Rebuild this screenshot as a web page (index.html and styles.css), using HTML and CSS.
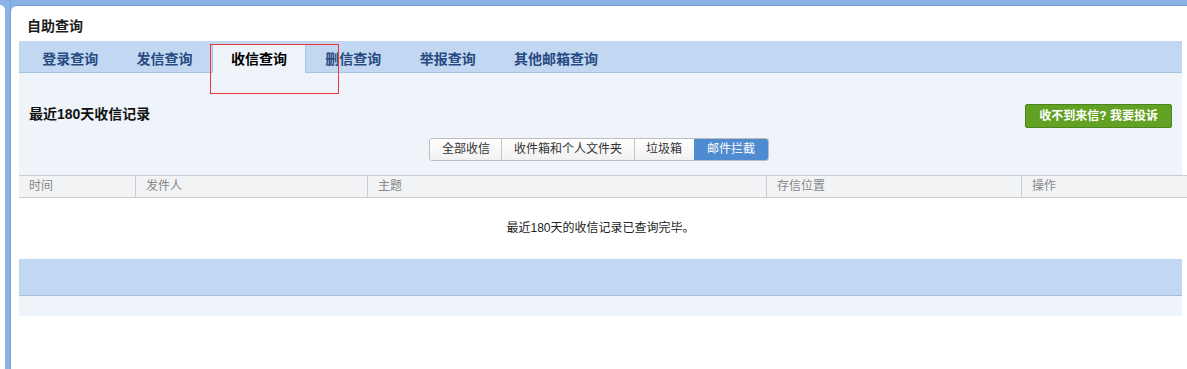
FILE: index.html
```html
<!DOCTYPE html>
<html lang="zh-CN">
<head>
<meta charset="utf-8">
<title>自助查询</title>
<link rel="stylesheet" href="styles.css">
</head>
<body>
<div class="shell">
  <div class="rail"></div>
  <div class="bar"></div>
  <div class="panel">
    <div class="title">自助查询</div>
    <div class="tabbar">
      <div class="tab">登录查询</div>
      <div class="tab">发信查询</div>
      <div class="tab active">收信查询</div>
      <div class="tab">删信查询</div>
      <div class="tab">举报查询</div>
      <div class="tab">其他邮箱查询</div>
    </div>
    <div class="content">
      <div class="toolbar">
        <div class="heading">最近180天收信记录</div>
        <div class="complain">收不到来信? 我要投诉</div>
      </div>
      <div class="segwrap">
        <div class="seg">
          <div class="segbtn">全部收信</div>
          <div class="segbtn">收件箱和个人文件夹</div>
          <div class="segbtn">垃圾箱</div>
          <div class="segbtn on">邮件拦截</div>
        </div>
      </div>
    </div>
    <div class="thead">
      <div class="th">时间</div>
      <div class="th sep">发件人</div>
      <div class="th sep">主题</div>
      <div class="th sep">存信位置</div>
      <div class="th sep">操作</div>
    </div>
    <div class="empty">最近180天的收信记录已查询完毕。</div>
    <div class="band"></div>
    <div class="band2"></div>
  </div>
</div>
<div class="mark"></div>
</body>
</html>
```
FILE: styles.css
```css
html, body {
  margin: 0;
  padding: 0;
  background: #fff;
  font-family: "Liberation Sans", "Noto Sans CJK SC", sans-serif;
  font-size: 12px;
  color: #222;
}
.shell {
  display: flex;
  height: 369px;
  background: #8ab3e6;
}
.rail {
  width: 5px;
  margin-top: 5px;
  background: #fff;
  border-top-right-radius: 5px;
}
.bar {
  width: 5px;
  border-right: 1px solid #74a2da;
}
.panel {
  flex: 1;
  margin-top: 5px;
  background: #fff;
  border-top: 1px solid #6f9ad2;
  border-top-left-radius: 6px;
  padding: 0 5px 0 8px;
  position: relative;
  overflow: hidden;
}
.title {
  padding: 11px 0 6px 8px;
  font-size: 14px;
  line-height: 18px;
  font-weight: bold;
  color: #1d1d1d;
}
.tabbar {
  display: flex;
  height: 31px;
  padding: 0 0 0 4px;
  background: #c2d8f2;
  border-bottom: 1px solid #a8c3e2;
  align-items: flex-end;
}
.tab {
  height: 28px;
  line-height: 28px;
  padding: 0 18.2px;
  margin-bottom: -1px;
  border: 1px solid transparent;
  border-bottom: 0;
  font-size: 14px;
  font-weight: bold;
  color: #284a82;
}
.tab.active {
  background: #eff4fb;
  border-color: #a8c3e2;
  color: #000;
}
.content {
  background: #eff4fb;
  padding: 31px 10px 14px 10px;
}
.toolbar {
  display: flex;
  justify-content: space-between;
  align-items: center;
  height: 24px;
}
.heading {
  font-size: 14px;
  font-weight: bold;
  line-height: 18px;
  color: #111;
  margin-top: -4px;
}
.complain {
  height: 22px;
  line-height: 22px;
  padding: 0 13px;
  background: #63a124;
  border: 1px solid #4a861c;
  border-radius: 2px;
  color: #fff;
  font-weight: bold;
  font-size: 12px;
}
.segwrap {
  display: flex;
  justify-content: center;
  margin-top: 10px;
}
.seg {
  display: flex;
  border: 1px solid #bdbdbd;
  border-radius: 3px;
  overflow: hidden;
  margin-right: 3px;
}
.segbtn {
  height: 21px;
  line-height: 21px;
  padding: 0 11.5px;
  background: linear-gradient(#ffffff, #f1f1f1);
  border-left: 1px solid #c4c4c4;
  color: #333;
}
.segbtn:first-child {
  border-left: 0;
}
.segbtn.on {
  background: #4f8bd0;
  border-left-color: #4f8bd0;
  color: #fff;
  padding: 0 12.5px;
}
.thead {
  display: grid;
  grid-template-columns: 116px 232px 399px 255px 1fr;
  height: 21px;
  background: #f2f3f5;
  border-top: 1px solid #c9ccd1;
  border-bottom: 1px solid #c9ccd1;
  margin-right: -5px;
}
.th {
  padding-left: 10px;
  line-height: 21px;
  color: #888;
}
.th.sep {
  border-left: 1px solid #c9ccd1;
}
.empty {
  height: 61px;
  line-height: 60px;
  text-align: center;
  color: #222;
}
.band {
  height: 36px;
  background: #c2d8f2;
  border-bottom: 1px solid #a8bcd8;
}
.band2 {
  height: 20px;
  background: #eff4fb;
}
.mark {
  position: absolute;
  left: 210px;
  top: 44px;
  width: 127px;
  height: 48px;
  border: 1px solid #e8383a;
}
```
